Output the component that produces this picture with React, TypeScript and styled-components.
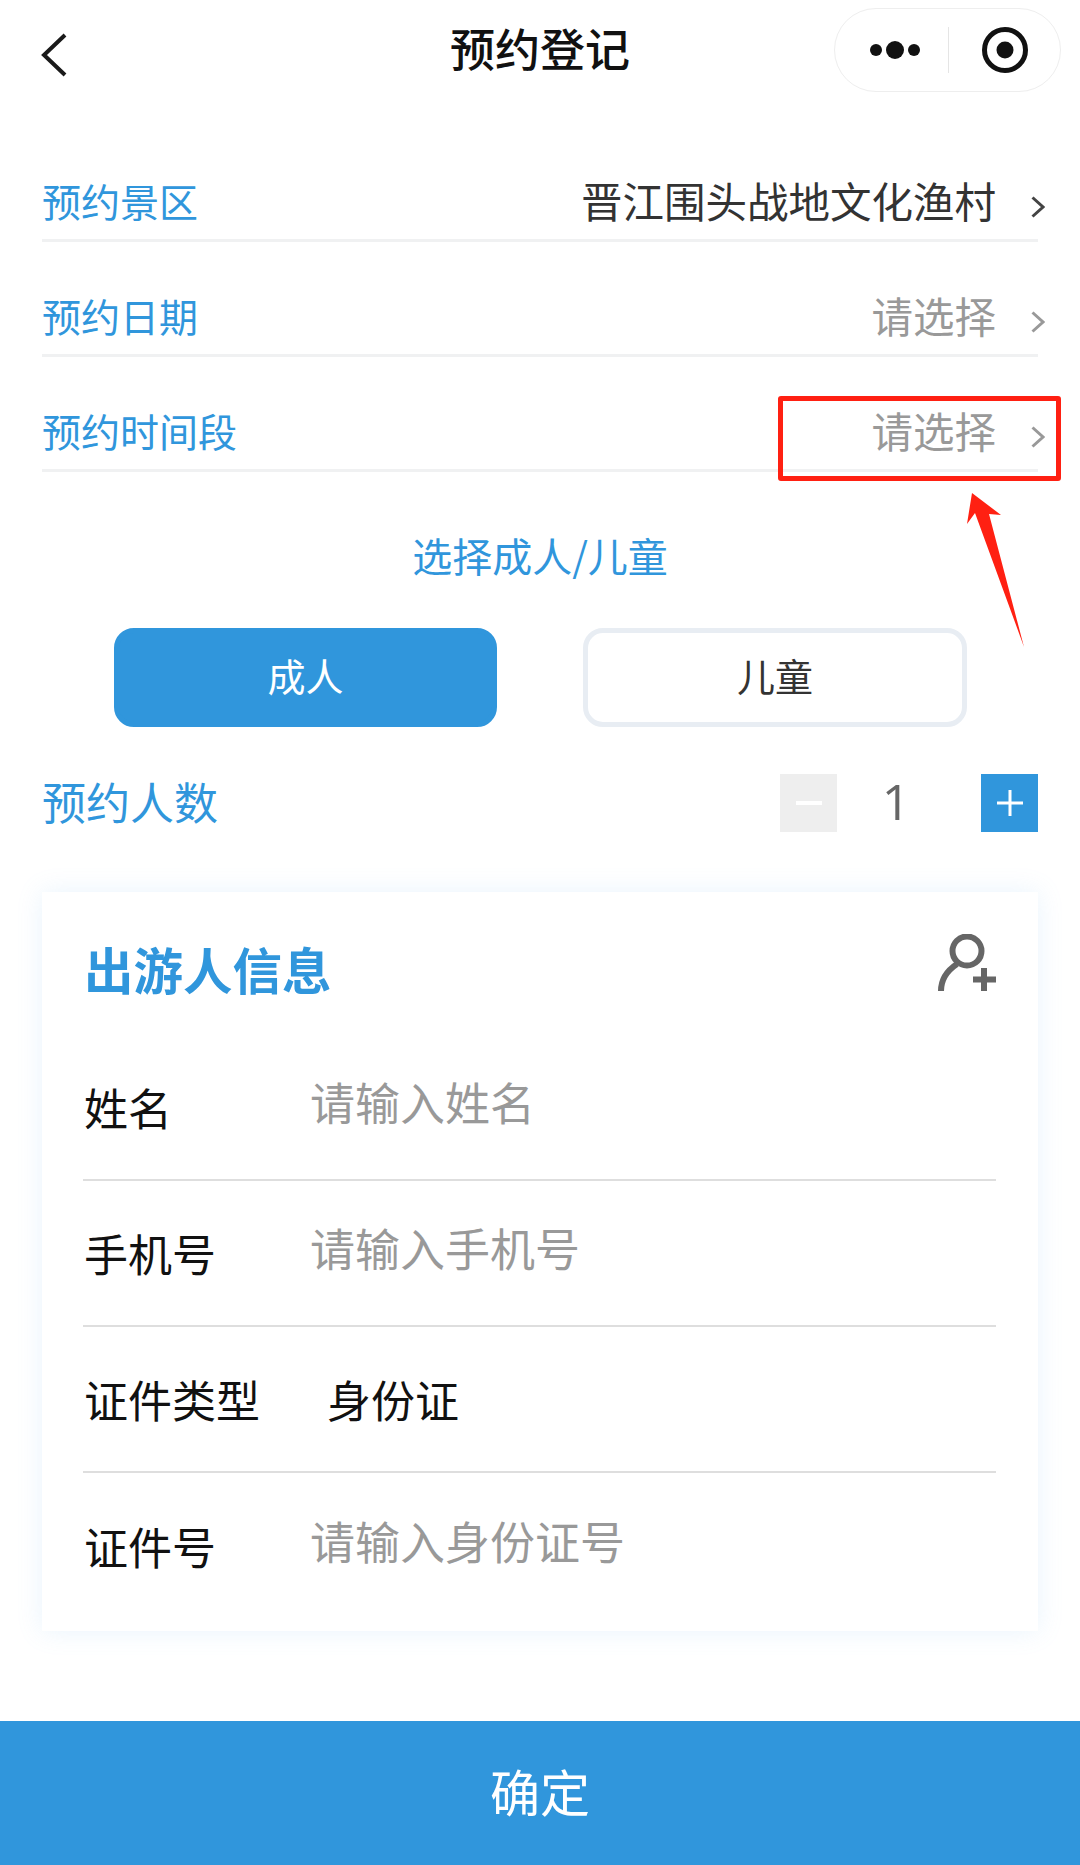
import React from "react";
import styled, { createGlobalStyle } from "styled-components";

const BLUE = "#3096dc";

const GlobalStyle = createGlobalStyle`
  html, body {
    margin: 0;
    padding: 0;
    background: #fff;
  }
  * {
    box-sizing: border-box;
  }
  body {
    font-family: "Noto Sans CJK SC", "Noto Sans", sans-serif;
  }
`;

const Chevron = ({ color }: { color: string }) => (
  <ChevronSvg viewBox="0 0 14 22">
    <path d="M1.5 1.5 L12 11 L1.5 20.5" fill="none" stroke={color} strokeWidth="3" />
  </ChevronSvg>
);

const App = () => {
  return (
    <Page>
      <GlobalStyle />
      <Header>
        <BackButton viewBox="0 0 26 44">
          <path d="M24 2 L3 22 L24 42" fill="none" stroke="#1a1a1a" strokeWidth="4" />
        </BackButton>
        <Title>预约登记</Title>
        <Capsule>
          <Dots viewBox="0 0 50 20">
            <circle cx="6" cy="10" r="6" fill="#111" />
            <circle cx="25" cy="10" r="9" fill="#111" />
            <circle cx="44" cy="10" r="6" fill="#111" />
          </Dots>
          <CapsuleDivider />
          <Target viewBox="0 0 46 46">
            <circle cx="23" cy="23" r="20.5" fill="none" stroke="#111" strokeWidth="5" />
            <circle cx="23" cy="23" r="8.5" fill="#111" />
          </Target>
        </Capsule>
      </Header>

      <Form>
        <FormRow>
          <RowLabel>预约景区</RowLabel>
          <RowValue $filled>晋江围头战地文化渔村</RowValue>
          <Chevron color="#444" />
        </FormRow>
        <FormRow>
          <RowLabel>预约日期</RowLabel>
          <RowValue>请选择</RowValue>
          <Chevron color="#999" />
        </FormRow>
        <FormRow>
          <RowLabel>预约时间段</RowLabel>
          <RowValue>请选择</RowValue>
          <Chevron color="#999" />
        </FormRow>
      </Form>

      <SectionTitle>选择成人/儿童</SectionTitle>
      <TypeSwitch>
        <TypeButton $active>成人</TypeButton>
        <TypeButton>儿童</TypeButton>
      </TypeSwitch>

      <CountRow>
        <CountLabel>预约人数</CountLabel>
        <Stepper>
          <StepButton>
            <svg width="26" height="4" viewBox="0 0 26 4">
              <rect width="26" height="4" fill="#fff" />
            </svg>
          </StepButton>
          <CountValue>1</CountValue>
          <StepButton $primary>
            <svg width="26" height="26" viewBox="0 0 26 26">
              <path d="M13 0 V26 M0 13 H26" stroke="#fff" strokeWidth="3" />
            </svg>
          </StepButton>
        </Stepper>
      </CountRow>

      <Card>
        <CardHead>
          <CardTitle>出游人信息</CardTitle>
          <UserPlus viewBox="0 0 58 57">
            <circle cx="29" cy="17" r="14.5" fill="none" stroke="#666" strokeWidth="6" />
            <path d="M3 57 C3 44 10 36 19 30" fill="none" stroke="#666" strokeWidth="6" />
            <path d="M46 34 V57 M35 45.5 H58" stroke="#666" strokeWidth="6" />
          </UserPlus>
        </CardHead>
        <Field>
          <FieldLabel>姓名</FieldLabel>
          <FieldInput readOnly placeholder="请输入姓名" />
        </Field>
        <Field>
          <FieldLabel>手机号</FieldLabel>
          <FieldInput readOnly placeholder="请输入手机号" />
        </Field>
        <Field>
          <FieldLabel>证件类型</FieldLabel>
          <FieldText>身份证</FieldText>
        </Field>
        <Field>
          <FieldLabel>证件号</FieldLabel>
          <FieldInput readOnly placeholder="请输入身份证号" />
        </Field>
      </Card>

      <Footer>确定</Footer>

      <Highlight />
      <ArrowMark viewBox="0 0 60 160">
        <polygon points="7,0 36,22 24,21 59,154 10,20 2,31" fill="#ff2012" />
      </ArrowMark>
    </Page>
  );
};

export default App;

const Page = styled.div`
  position: relative;
  width: 1080px;
  min-height: 1865px;
  display: flex;
  flex-direction: column;
  background: #fff;
  overflow: hidden;
`;

const Header = styled.header`
  height: 100px;
  display: grid;
  grid-template-columns: 1fr auto 1fr;
  align-items: center;
  padding: 0 19px 0 19px;
`;

const BackButton = styled.svg`
  width: 26px;
  height: 44px;
  margin: 9px 0 0 22px;
`;

const Title = styled.h1`
  margin: 0 0 5px;
  font-size: 45px;
  line-height: 60px;
  font-weight: 500;
  color: #111;
`;

const Capsule = styled.div`
  justify-self: end;
  width: 227px;
  height: 84px;
  display: flex;
  align-items: center;
  padding-left: 35px;
  border: 1px solid #eee;
  border-radius: 42px;
  background: #fff;
`;

const Dots = styled.svg`
  width: 50px;
  height: 20px;
`;

const CapsuleDivider = styled.span`
  width: 1px;
  height: 46px;
  margin: 0 33px 0 28px;
  background: #e5e5e5;
`;

const Target = styled.svg`
  width: 46px;
  height: 46px;
`;

const Form = styled.section`
  margin: 27px 42px 0 42px;
`;

const FormRow = styled.div`
  height: 115px;
  display: flex;
  align-items: flex-end;
  padding-bottom: 10px;
  border-bottom: 3px solid #f0f1f2;
`;

const RowLabel = styled.span`
  flex: 1;
  font-size: 39px;
  line-height: 58px;
  color: ${BLUE};
`;

const RowValue = styled.span<{ $filled?: boolean }>`
  font-size: 41.5px;
  line-height: 58px;
  color: ${(p) => (p.$filled ? "#333" : "#999")};
`;

const ChevronSvg = styled.svg`
  width: 14px;
  height: 22px;
  margin: 0 -7px 11px 35px;
`;

const SectionTitle = styled.div`
  margin-top: 54px;
  font-size: 40px;
  line-height: 58px;
  text-align: center;
  color: ${BLUE};
`;

const TypeSwitch = styled.div`
  margin: 44px 113px 0 114px;
  display: grid;
  grid-template-columns: 383px 384px;
  justify-content: space-between;
`;

const TypeButton = styled.div<{ $active?: boolean }>`
  height: 99px;
  display: flex;
  align-items: center;
  justify-content: center;
  padding-bottom: 6px;
  font-size: 38px;
  border-radius: 20px;
  color: ${(p) => (p.$active ? "#fff" : "#333")};
  background: ${(p) => (p.$active ? BLUE : "#fff")};
  border: 5px solid ${(p) => (p.$active ? BLUE : "#e8edf3")};
`;

const CountRow = styled.div`
  margin: 45px 42px 0 42px;
  display: flex;
  align-items: center;
  justify-content: space-between;
`;

const CountLabel = styled.span`
  margin-bottom: 4px;
  font-size: 44px;
  line-height: 58px;
  color: ${BLUE};
`;

const Stepper = styled.div`
  width: 258px;
  display: flex;
  align-items: center;
  justify-content: space-between;
`;

const StepButton = styled.div<{ $primary?: boolean }>`
  width: 57px;
  height: 58px;
  display: flex;
  align-items: center;
  justify-content: center;
  background: ${(p) => (p.$primary ? BLUE : "#eee")};
`;

const CountValue = styled.span`
  margin: 0 26px 4px 0;
  font-family: "Open Sans", sans-serif;
  font-size: 50px;
  line-height: 58px;
  color: #666;
`;

const Card = styled.section`
  margin: 58px 42px 0 42px;
  padding: 0 42px 12px 41px;
  background: #fff;
  box-shadow: 0 0 24px rgba(120, 185, 240, 0.16);
`;

const CardHead = styled.div`
  height: 143px;
  display: flex;
  align-items: flex-start;
  justify-content: space-between;
`;

const CardTitle = styled.h2`
  margin: 46px 0 0 1px;
  font-size: 49.5px;
  line-height: 62px;
  font-weight: 700;
  color: ${BLUE};
`;

const UserPlus = styled.svg`
  width: 58px;
  height: 57px;
  margin-top: 42px;
`;

const Field = styled.div`
  height: 146px;
  display: flex;
  align-items: center;
  border-bottom: 2px solid #dedede;
  &:last-child {
    border-bottom: none;
  }
`;

const FieldLabel = styled.span`
  width: 227px;
  flex: none;
  margin-bottom: 1px;
  padding-left: 1px;
  font-size: 44px;
  line-height: 60px;
  color: #111;
`;

const FieldInput = styled.input`
  flex: 1;
  min-width: 0;
  height: 60px;
  margin-bottom: 10px;
  padding: 0;
  border: none;
  outline: none;
  background: transparent;
  font-family: inherit;
  font-size: 45px;
  line-height: 60px;
  &::placeholder {
    color: #999;
    opacity: 1;
  }
`;

const FieldText = styled.span`
  margin-bottom: 1px;
  padding-left: 17px;
  font-size: 44px;
  line-height: 60px;
  color: #111;
`;

const Footer = styled.footer`
  margin-top: auto;
  height: 144px;
  display: flex;
  align-items: center;
  justify-content: center;
  padding-bottom: 7px;
  font-size: 50px;
  color: #fff;
  background: ${BLUE};
`;

const Highlight = styled.div`
  position: absolute;
  left: 778px;
  top: 396px;
  width: 283px;
  height: 85px;
  border: 5px solid #ff2012;
  border-radius: 3px;
`;

const ArrowMark = styled.svg`
  position: absolute;
  left: 965px;
  top: 493px;
  width: 60px;
  height: 160px;
`;
